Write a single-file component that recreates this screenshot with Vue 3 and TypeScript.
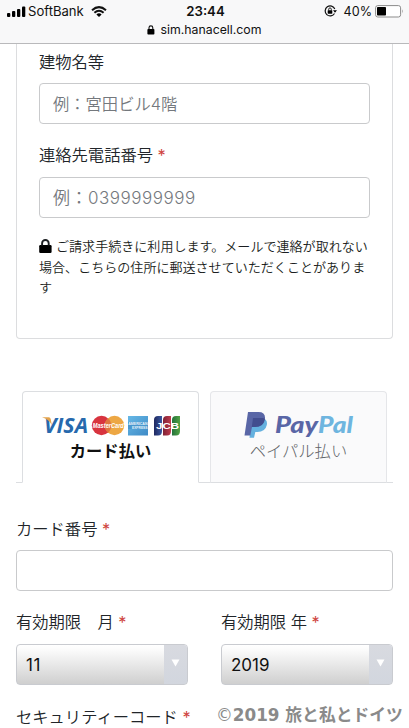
<script setup lang="ts">
import { ref } from 'vue'

type Method = 'card' | 'paypal'

const method = ref<Method>('card')
const building = ref('')
const phone = ref('')
const cardNumber = ref('')
const month = '11'
const year = '2019'
</script>

<template>
  <div class="screen">
    <header class="browser">
      <div class="status">
        <div class="carrier">
          <svg class="signal" width="19" height="11" viewBox="0 0 19 11">
            <rect x="0" y="7" width="3.3" height="4" rx="1" />
            <rect x="5" y="5" width="3.3" height="6" rx="1" />
            <rect x="10" y="3" width="3.3" height="8" rx="1" />
            <rect x="15" y="0.4" width="3.3" height="10.6" rx="1" />
          </svg>
          <span class="carrier-name">SoftBank</span>
          <svg class="wifi" width="16" height="11" viewBox="0 0 16 11">
            <path d="M1 4.2Q8-2 15 4.2M3.4 6.7Q8 2.7 12.6 6.7" fill="none" stroke="#111" stroke-width="2" />
            <path d="M5.4 8.4Q8 6.2 10.6 8.4L8 11Z" />
          </svg>
        </div>
        <span class="clock">23:44</span>
        <div class="power">
          <svg class="rotation" width="13" height="12" viewBox="0 0 13 12">
            <path d="M10.8 4A5 5 0 1 0 10.5 8.5" fill="none" stroke="#111" stroke-width="1.2" />
            <path d="M9 5.2h4L11 7.8Z" />
            <rect x="3.7" y="5.2" width="4.6" height="3.5" rx=".4" />
            <path d="M4.7 5.4V4.2a1.3 1.3 0 0 1 2.6 0v1.2" fill="none" stroke="#111" stroke-width=".9" />
          </svg>
          <span class="percent">40%</span>
          <svg class="battery" width="29" height="13" viewBox="0 0 29 13">
            <rect x=".6" y=".6" width="25" height="11.4" rx="2.2" fill="#fff" stroke="#8b8b8b" />
            <rect x="2" y="2" width="9" height="8.6" rx=".8" fill="#000" />
            <path d="M27 4.2q1.7 2.1 0 4.2Z" fill="#8b8b8b" />
          </svg>
        </div>
      </div>
      <div class="address">
        <svg width="8" height="10" viewBox="0 0 8 10">
          <rect x=".4" y="4" width="7" height="5.6" rx=".8" />
          <path d="M2 4.5V2.8a1.9 1.9 0 0 1 3.8 0v1.7" fill="none" stroke="#111" stroke-width="1.1" />
        </svg>
        <span>sim.hanacell.com</span>
      </div>
    </header>

    <main>
      <section class="contact">
        <label class="label" for="building">建物名等</label>
        <input id="building" v-model="building" class="input" placeholder="例：宮田ビル4階">
        <label class="label second" for="phone">連絡先電話番号 <b class="req">*</b></label>
        <input id="phone" v-model="phone" class="input digits" placeholder="例：0399999999">
        <p class="note">
          <svg width="13" height="14" viewBox="0 0 13 14">
            <rect x=".2" y="6" width="12.4" height="8" rx="1.2" />
            <path d="M3.1 6.5V4.3a3.3 3.3 0 0 1 6.6 0v2.2" fill="none" stroke="#1b1e21" stroke-width="1.9" />
          </svg><span>ご請求手続きに利用します。メールで連絡が取れない場合、こちらの住所に郵送させていただくことがあります</span>
        </p>
      </section>

      <nav class="tabs">
        <button class="tab" :class="{ active: method === 'card' }" type="button" @click="method = 'card'">
          <svg class="logo" width="140" height="24" viewBox="0 0 140 24">
            <defs>
              <linearGradient id="amex" x1="0" y1="0" x2="1" y2="1">
                <stop offset="0" stop-color="#66b8e6" /><stop offset="1" stop-color="#3e8ac6" />
              </linearGradient>
              <linearGradient id="jcbBlue"><stop stop-color="#20285f" /><stop offset="1" stop-color="#3757a0" /></linearGradient>
              <linearGradient id="jcbRed"><stop stop-color="#7e2335" /><stop offset="1" stop-color="#c03a4c" /></linearGradient>
              <linearGradient id="jcbGreen"><stop stop-color="#23713c" /><stop offset="1" stop-color="#52a344" /></linearGradient>
            </defs>
            <text class="visa" x="3" y="20" textLength="44" lengthAdjust="spacingAndGlyphs">VISA</text>
            <path d="M1 4.3h6.8q1.5 0 1.9 1.8l1.1 5.8Q8 6.5 1 4.3Z" fill="#e3a34c" />
            <circle cx="60.5" cy="12.5" r="9.7" fill="#d8343f" />
            <circle cx="73.5" cy="12.5" r="9.7" fill="#eda744" />
            <path d="M67 5.3a9.7 9.7 0 0 1 0 14.4a9.7 9.7 0 0 1 0-14.4" fill="#df7740" />
            <text class="master" x="51.8" y="15" textLength="31" lengthAdjust="spacingAndGlyphs">MasterCard</text>
            <rect x="87" y="3" width="20" height="19.5" fill="url(#amex)" />
            <rect x="87" y="9" width="20" height="7" fill="#4a97ce" />
            <text class="amex" x="87.3" y="12.3" textLength="19.2" lengthAdjust="spacingAndGlyphs">AMERICAN</text>
            <text class="amex" x="91" y="16.3" textLength="15.5" lengthAdjust="spacingAndGlyphs">EXPRESS</text>
            <path d="M113 22.5V7q0-4 4-4h4v15q0 4.5-4 4.5Z" fill="url(#jcbBlue)" />
            <path d="M122 22.5V7q0-4 4-4h4v15q0 4.5-4 4.5Z" fill="url(#jcbRed)" />
            <path d="M131 22.5V7q0-4 4-4h4v15q0 4.5-4 4.5Z" fill="url(#jcbGreen)" />
            <text class="jcb" x="115" y="16" textLength="23" lengthAdjust="spacingAndGlyphs">JCB</text>
          </svg>
          <span>カード払い</span>
        </button>
        <button class="tab" :class="{ active: method === 'paypal' }" type="button" @click="method = 'paypal'">
          <svg class="logo paypal" width="110" height="28" viewBox="0 0 110 28">
            <path d="M8 7h10q6 1 4.8 7q-1.5 7-9.5 7h-2L10 26.8H5.5Z" fill="#65b1df" />
            <path d="M4 1h10.5q7 0 6.5 6.5Q20 16 10.5 16H8L6.3 24.5H.5Z" fill="#5966a6" />
            <path d="M9 7h9.5q2.3 0 2.3 1.2Q19.5 16 11 16H7.8Z" fill="#424d8e" />
            <text class="pay" x="31" y="22" textLength="43" lengthAdjust="spacingAndGlyphs">Pay</text>
            <text class="pal" x="74" y="22" textLength="35" lengthAdjust="spacingAndGlyphs">Pal</text>
          </svg>
          <span>ペイパル払い</span>
        </button>
      </nav>

      <section class="card-form">
        <label class="label" for="number">カード番号 <b class="req">*</b></label>
        <input id="number" v-model="cardNumber" class="input">
        <div class="expiry">
          <div>
            <span class="label">有効期限　月 <b class="req">*</b></span>
            <div class="select">
              <span class="value month">{{ month }}</span>
              <span class="arrow"><svg width="9" height="8" viewBox="0 0 9 8"><path d="M.5.5h8L4.5 7.5Z" fill="#fff" /></svg></span>
            </div>
          </div>
          <div>
            <span class="label">有効期限 年 <b class="req">*</b></span>
            <div class="select">
              <span class="value">{{ year }}</span>
              <span class="arrow"><svg width="9" height="8" viewBox="0 0 9 8"><path d="M.5.5h8L4.5 7.5Z" fill="#fff" /></svg></span>
            </div>
          </div>
        </div>
        <span class="label code">セキュリティーコード <b class="req">*</b></span>
      </section>
    </main>
    <div class="watermark"><span class="copy">©</span>2019 旅と私とドイツ</div>
  </div>
</template>

<style>
body {
  background: #fff;
  overflow: hidden;
}
</style>

<style scoped>
.screen {
  position: relative;
  width: 409px;
  height: 728px;
  overflow: hidden;
  background: #fff;
  color: #212529;
  font-family: Inter, "Noto Sans CJK JP", sans-serif;
  font-size: 16.3px;
}
.screen *, .screen {
  box-sizing: border-box;
}
.browser {
  height: 44px;
  background: #f8f8f9;
  border-bottom: 1px solid #b9b9bb;
  color: #111;
}
.status {
  display: grid;
  grid-template-columns: 1fr auto 1fr;
  align-items: center;
  height: 22px;
  padding: 0 5px 0 7px;
}
.carrier, .power {
  display: flex;
  align-items: center;
}
.carrier-name {
  margin-left: 2px;
  font-size: 13.1px;
}
.wifi {
  margin-left: 7px;
}
.clock {
  font-size: 13.2px;
  font-weight: 600;
}
.power {
  justify-content: flex-end;
}
.percent {
  margin: 0 3px 0 7px;
  font-size: 12.6px;
}
.address {
  display: flex;
  justify-content: center;
  align-items: center;
  gap: 6px;
  height: 15px;
  padding-right: 1px;
  font-size: 12.3px;
}
.contact {
  height: 295px;
  margin: 0 16px;
  padding: 6px 22px 0;
  border: 1px solid #dcdddf;
  border-top: 0;
  border-radius: 0 0 4px 4px;
}
.label {
  display: block;
  height: 24px;
  margin-bottom: 9px;
  line-height: 24px;
  font-weight: 350;
  white-space: nowrap;
}
.second {
  margin: 19px 0 10px;
}
.req {
  color: #cf4540;
  font-weight: 400;
}
.input {
  display: block;
  width: 100%;
  height: 41px;
  padding: 0 13px;
  border: 1px solid #c9cacc;
  border-radius: 4px;
  outline: 0;
  background: #fff;
  color: #495057;
  font: inherit;
}
.input::placeholder {
  color: #74787d;
  font-weight: 350;
  opacity: 1;
}
.digits {
  font-size: 17px;
  letter-spacing: .5px;
}
.note {
  margin: 18px -4px 0 0;
  font-size: 13.05px;
  font-weight: 350;
  line-height: 20.6px;
  color: #1b1e21;
  word-break: break-all;
}
.note svg {
  margin-right: 4px;
  vertical-align: -2px;
}
.tabs {
  display: flex;
  gap: 11px;
  height: 92px;
  margin: 52px 16px 0;
  padding: 0 6px;
  border-bottom: 1px solid #dcdee1;
}
.tab {
  display: flex;
  flex-direction: column;
  align-items: center;
  width: 177px;
  height: 92px;
  padding: 21px 0 0;
  border: 1px solid #e5e6e9;
  border-bottom-color: #dcdee1;
  border-radius: 4px 4px 0 0;
  background: #fafafb;
  color: #606366;
  font: 300 16.3px/24px Inter, "Noto Sans CJK JP", sans-serif;
}
.tab.active {
  border-color: #dcdee1;
  border-bottom-color: #fff;
  background: #fff;
  color: #111;
  font-weight: 700;
}
.logo {
  display: block;
  flex: none;
  margin-bottom: 2px;
  overflow: visible;
}
.logo.paypal {
  margin-top: -2px;
  margin-bottom: 0;
}
.visa {
  fill: #2769ad;
  font: italic 700 21.5px "Open Sans", sans-serif;
}
.master {
  fill: #fff;
  font: italic 700 6.4px "Liberation Sans", sans-serif;
}
.amex {
  fill: #e9f5fc;
  font: 700 4px "Liberation Sans", sans-serif;
}
.jcb {
  fill: #fff;
  font: 700 9px "Liberation Sans", sans-serif;
}
.pay, .pal {
  fill: #5966a6;
  font: italic 900 23px Lato, sans-serif;
}
.pal {
  fill: #6eb5df;
}
.card-form {
  padding: 34px 16px 0;
}
.expiry {
  display: grid;
  grid-template-columns: 172px 172px;
  gap: 33px;
  margin-top: 19px;
}
.expiry .label {
  margin-bottom: 10px;
}
.select {
  display: flex;
  height: 41px;
  overflow: hidden;
  border: 1px solid #c9cbd0;
  border-radius: 4px;
  background: linear-gradient(#fff, #fafafa 15%, #cfcfcf);
  color: #111;
}
.value {
  flex: 1;
  padding-left: 9px;
  font-size: 17px;
  line-height: 40px;
}
.month {
  letter-spacing: .6px;
}
.arrow {
  display: flex;
  align-items: center;
  justify-content: center;
  width: 23px;
  padding-bottom: 4px;
  background: linear-gradient(#d8dae0, #d2d6de);
}
.code {
  margin-top: 20px;
}
.watermark {
  position: absolute;
  top: 701px;
  left: 216px;
  height: 28px;
  color: #8a8a8a;
  font: 700 16.8px/28px "DejaVu Sans", "Noto Sans CJK JP", sans-serif;
  white-space: nowrap;
}
.copy {
  font-weight: 400;
}
</style>
